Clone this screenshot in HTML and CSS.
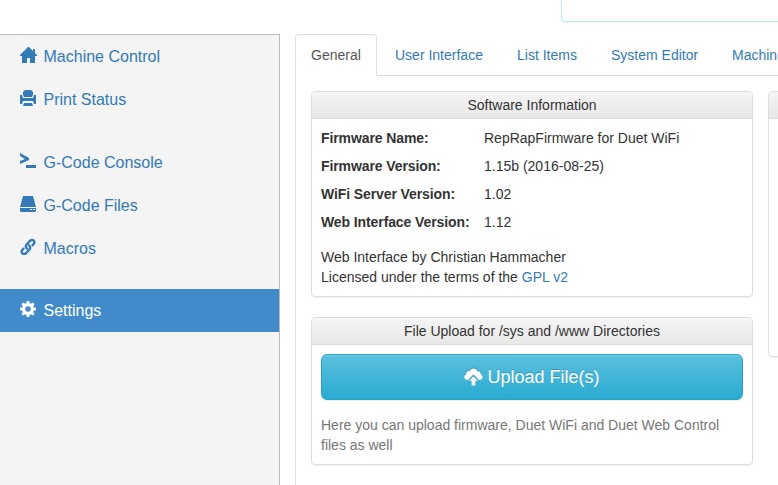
FILE: index.html
```html
<!DOCTYPE html>
<html lang="en">
<head>
<meta charset="utf-8">
<title>Duet Web Control</title>
<link rel="stylesheet" href="styles.css">
</head>
<body>
<div class="top"><div class="top-panel"></div></div>
<div class="layout">
  <nav class="sidebar">
    <a class="item"><svg class="icon" viewBox="0 0 18 16"><path d="M8 0 0 8v1h2v7h5v-5h3v5h5V9h2V8l-2-2V2h-2v2L9 0z"/></svg><span>Machine Control</span></a>
    <a class="item"><svg class="icon" viewBox="0 0 18 16"><path d="M5 0h6l2 2v3l-1 2H4L3 5V2zM0 5h2l1 3h10l1-3h2v9h-2l-1-3H3l-1 3H0zM4 13h8l1 3H3z"/></svg><span>Print Status</span></a>
    <a class="item gap"><svg class="icon" viewBox="0 0 18 16"><path d="M0 0l9 5v2l-9 4V8l5-2-5-3zM6 12h10v3H6z"/></svg><span>G-Code Console</span></a>
    <a class="item"><svg class="icon" viewBox="0 0 18 16"><path d="M3 0h10l3 11H0zM0 12h16v3l-1 1H1l-1-1z"/><path class="slot" d="M10 13h2v1h-2zM13 13h2v1h-2z"/></svg><span>G-Code Files</span></a>
    <a class="item"><svg class="icon link" viewBox="0 0 18 16"><path d="M7.800 10.200C5.500 9 5.200 6.800 6.700 5.200L9.800 2c3-2.800 6 .5 3.700 3.300L12 7M8.200 5.800c2.300 1.200 2.600 3.400 1.100 5L6.200 14c-3 2.800-6-.5-3.700-3.300L4 9"/></svg><span>Macros</span></a>
    <a class="item active"><svg class="icon" viewBox="0 0 18 16"><path fill-rule="evenodd" d="M6.800 0h2.400l.5 2.300 1.200.5 2-1.300 1.700 1.700-1.400 2 .5 1.200 2.300.4v2.400l-2.300.5-.5 1.200 1.400 2-1.700 1.600-2-1.300-1.200.5-.5 2.300H6.800l-.5-2.300-1.200-.5-2 1.300-1.600-1.600 1.300-2-.5-1.200L0 9.200V6.800l2.300-.4.5-1.200-1.300-2 1.600-1.700 2 1.300 1.200-.5zM8 5.200a2.800 2.800 0 1 0 0 5.600 2.800 2.800 0 0 0 0-5.600z"/></svg><span>Settings</span></a>
  </nav>
  <main class="main">
    <div class="tabs">
      <a class="tab current"><span class="n1">General</span></a>
      <a class="tab"><span class="n2">User Interface</span></a>
      <a class="tab"><span class="n3">List Items</span></a>
      <a class="tab"><span class="n4">System Editor</span></a>
      <a class="tab"><span>Machine</span></a>
    </div>
    <div class="content">
      <div class="column">
        <section class="panel info">
          <h2>Software Information</h2>
          <div class="body">
            <dl>
              <dt>Firmware Name:</dt><dd>RepRapFirmware for Duet WiFi</dd>
              <dt>Firmware Version:</dt><dd>1.15b (2016-08-25)</dd>
              <dt>WiFi Server Version:</dt><dd>1.02</dd>
              <dt>Web Interface Version:</dt><dd>1.12</dd>
            </dl>
            <p>Web Interface by Christian Hammacher<br>Licensed under the terms of the <a>GPL v2</a></p>
          </div>
        </section>
        <section class="panel upload">
          <h2>File Upload for /sys and /www Directories</h2>
          <div class="body">
            <button><svg class="cloud" viewBox="0 0 20 18"><path d="M4.500 12H3C-.2 11.500-.8 7 2.400 6 2.200 3.500 4 2.200 5.800 2.800 7.500-.8 13-.8 14 3c2.500-.3 3.800 1 3.600 3 3.200 1.200 2.200 5.500-.6 6h-1.500L10 6.200z"/><path d="M10 8.200l4.500 4.800H12v5H8v-5H5.500z"/></svg><span>Upload File(s)</span></button>
            <p class="help">Here you can upload firmware, Duet WiFi and Duet Web Control<br>files as well</p>
          </div>
        </section>
      </div>
      <section class="panel side"><h2></h2></section>
    </div>
  </main>
</div>
</body>
</html>
```
FILE: styles.css
```css
* { box-sizing: border-box; }
body {
  margin: 0;
  width: 778px;
  height: 485px;
  overflow: hidden;
  background: #fff;
  color: #333;
  font: 14px/20px "Liberation Sans", Arial, sans-serif;
}
a { color: #337ab7; }
.top { height: 34px; padding-left: 561px; overflow: hidden; }
.top-panel {
  width: 300px;
  height: 22px;
  border: 1px solid #bce8f1;
  border-top: 0;
  border-radius: 0 0 4px 4px;
  box-shadow: 0 1px 1px rgba(0,0,0,.05);
}
.layout { display: flex; height: 451px; }
.sidebar {
  flex: 0 0 280px;
  background: #f4f4f4;
  border-top: 1px solid #bbb;
  border-right: 1px solid #bbb;
}
.item {
  display: flex;
  align-items: center;
  height: 43px;
  padding-left: 20px;
  font-size: 16px;
}
.item span { padding-top: 1px; }
.item.gap { margin-top: 20px; }
.item.active { margin-top: 19px; background: #428bca; color: #fff; }
.icon { width: 18px; height: 16px; margin: -3px 5.5px 0 0; fill: currentColor; }
.icon .slot { fill: #f4f4f4; }
.icon.link { fill: none; stroke: currentColor; stroke-width: 2.4; }
.main { flex: 1; min-width: 0; margin-left: 15px; overflow: hidden; }
.tabs { display: flex; gap: 2px; height: 42px; border-bottom: 1px solid #ddd; }
.tab { flex: none; height: 42px; padding: 10px 15px; border: 1px solid transparent; white-space: nowrap; }
.tab.current {
  color: #555;
  background: #fff;
  border-color: #ddd #ddd #fff;
  border-radius: 4px 4px 0 0;
}
.tab span { display: block; }
.n1 { width: 50px; }
.n2 { width: 88px; }
.n3 { width: 60px; }
.n4 { width: 87px; }
.content {
  display: flex;
  gap: 15px;
  height: 409px;
  padding: 15px 0 0 15px;
  border-left: 1px solid #ddd;
}
.column { flex: 0 0 442px; }
.panel {
  border: 1px solid #ddd;
  border-radius: 4px;
  box-shadow: 0 1px 1px rgba(0,0,0,.05);
  overflow: hidden;
}
.panel h2 {
  margin: 0;
  height: 27px;
  padding-top: 3px;
  font: inherit;
  text-align: center;
  background: linear-gradient(#f5f5f5, #e8e8e8);
  border-bottom: 1px solid #ddd;
}
.info { height: 206px; margin-bottom: 20px; }
.upload { height: 148px; }
.side { flex: 0 0 442px; height: 266px; }
.body { padding: 0 9px; }
dl {
  display: grid;
  grid-template-columns: 163px 1fr;
  grid-auto-rows: 28px;
  margin: 0;
  padding-top: 9px;
}
dt { font-weight: bold; letter-spacing: -.1px; }
dd { margin: 0; }
p { margin: 7px 0 0; white-space: nowrap; }
button {
  display: flex;
  justify-content: center;
  align-items: center;
  gap: 4px;
  width: 422px;
  height: 46px;
  margin-top: 9px;
  padding: 0;
  color: #fff;
  font: 18px/24px "Liberation Sans", Arial, sans-serif;
  text-shadow: 0 -1px 0 rgba(0,0,0,.2);
  background: linear-gradient(#5bc0de, #2aabd2);
  border: 1px solid #28a4c9;
  border-radius: 6px;
  box-shadow: inset 0 1px 0 rgba(255,255,255,.15), 0 1px 1px rgba(0,0,0,.075);
}
.cloud { width: 19px; height: 18px; fill: #fff; filter: drop-shadow(0 -1px 0 rgba(0,0,0,.2)); }
.help { margin-top: 15px; color: #777; }
```
